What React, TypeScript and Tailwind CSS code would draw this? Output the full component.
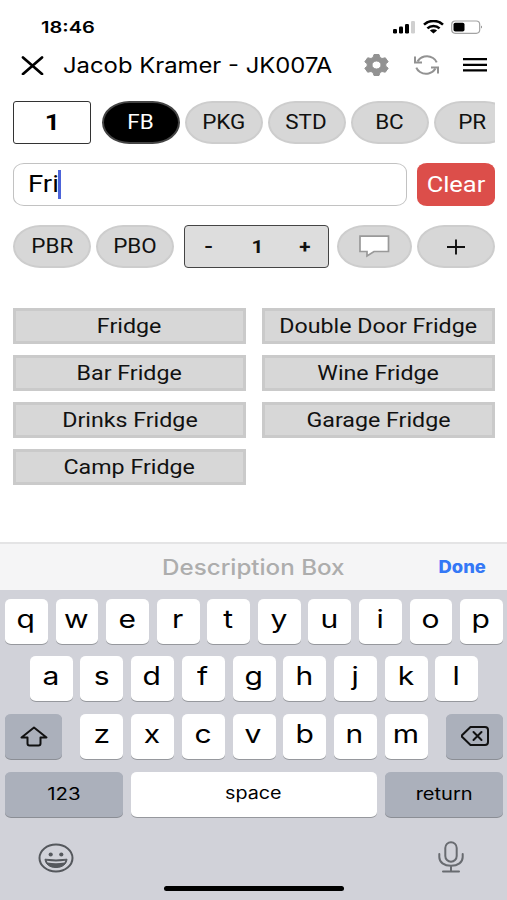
import type { ReactNode } from "react"
import { clsx } from "clsx"

const CATEGORIES = ["FB", "PKG", "STD", "BC", "PR"]

const RESULTS = [
  "Fridge",
  "Double Door Fridge",
  "Bar Fridge",
  "Wine Fridge",
  "Drinks Fridge",
  "Garage Fridge",
  "Camp Fridge"
]

interface TextProps {
  children: ReactNode
  className?: string
}

// Wide-set label text
function Label({ children, className }: TextProps) {
  return (
    <span className={clsx("inline-block whitespace-nowrap leading-none", className ?? "scale-x-[1.2]")}>
      {children}
    </span>
  )
}

interface PillProps {
  children: ReactNode
  active?: boolean
  className?: string
}

function Pill({ children, active, className }: PillProps) {
  return (
    <button
      className={clsx(
        "flex h-[43px] shrink-0 items-center justify-center rounded-[28px/22px] border-[2.500px] font-[Roboto,sans-serif] text-[19.500px]",
        active ? "border-[#444444] bg-black text-white" : "border-[#cdcdcd] bg-[#d7d7d7] text-[#111111]",
        className ?? "w-[78px]"
      )}
    >
      {children}
    </button>
  )
}

function StatusBar() {
  return (
    <div className="flex h-[46px] items-start justify-between pt-[20px] pr-[24px] pl-[41px]">
      <Label className="mt-[-1px] origin-left scale-x-[1.25] text-[16px] leading-[17px] font-semibold">18:46</Label>
      <div className="flex items-start">
        <svg width="23" height="14" viewBox="0 0 23 14">
          <rect x="0" y="9" width="4" height="4.5" rx="1.2" />
          <rect x="6" y="6.5" width="4" height="7" rx="1.2" />
          <rect x="12" y="4" width="4" height="9.5" rx="1.2" />
          <rect x="18" y="1" width="4" height="12.5" rx="1.2" fill="#d0d0d0" />
        </svg>
        <svg className="ml-[7px]" width="21" height="14" viewBox="0 0 21 14" fill="none" stroke="black" strokeWidth="2.500">
          <path d="M1 4.700C6.200-.3 14.800-.3 20 4.700" />
          <path d="M4.400 8.300C7.800 5.100 13.200 5.100 16.600 8.300" />
          <path d="M10.500 13.400 6.900 10.600C9 8.900 12 8.900 14.100 10.600z" fill="black" stroke="none" />
        </svg>
        <svg className="ml-[7px]" width="32" height="14" viewBox="0 0 32 14">
          <rect x=".7" y="1" width="28" height="12.300" rx="3.500" fill="white" stroke="#a3a3a3" strokeWidth="1.200" />
          <rect x="2.500" y="2.800" width="11" height="8.700" rx="1.800" />
          <path d="M30 5.500q2 1.500 0 3z" fill="#888888" />
        </svg>
      </div>
    </div>
  )
}

function Header() {
  return (
    <header className="flex h-[38px] items-center pr-[20px] pl-[21px]">
      <svg className="shrink-0" width="23" height="20" viewBox="0 0 23 20" fill="none" stroke="black" strokeWidth="2.700" strokeLinecap="round">
        <path d="M2 2.500 21 19M21 2.500 2 19" />
      </svg>
      <h1 className="ml-[19px] flex w-[301px]">
        <Label className="origin-left scale-x-[1.135] text-[21px]">Jacob Kramer - JK007A</Label>
      </h1>
      <svg className="shrink-0" width="25" height="22" viewBox="0 0 25 22" fill="#929292" fillRule="evenodd">
        <path
          d="M10 .5h5l1 3 2 1 3.300-.7 2.900 4-2.400 2v2.400l2.400 2-2.900 4-3.300-.7-2 1-1 3h-5l-1-3-2-1-3.300.7-2.900-4 2.400-2V9.800l-2.400-2 2.900-4 3.300.7 2-1zM12.500 7a4.500 4 0 1 0 0 8 4.500 4 0 0 0 0-8z"
          stroke="#929292"
          strokeLinejoin="round"
        />
      </svg>
      <svg className="ml-[25px] shrink-0" width="25" height="20" viewBox="0 0 25 20" fill="none" stroke="#929292" strokeWidth="2">
        <path d="M3.500 6.500C6.500 1.500 13.500-.5 19 3c1.800 1.100 3 2.500 3.700 4.300" />
        <path d="M1 1.500v6h7" />
        <path d="M21.500 13.500C18.500 18.500 11.500 20.500 6 17c-1.800-1.100-3-2.500-3.700-4.300" />
        <path d="M24 18.500v-6h-7" />
      </svg>
      <svg className="ml-[24px] shrink-0" width="24" height="16" viewBox="0 0 24 16" stroke="black" strokeWidth="2.200">
        <path d="M0 2.200h24M0 7.800h24M0 13.400h24" />
      </svg>
    </header>
  )
}

function Key({ children }: { children: string }) {
  return (
    <div className="flex h-[45px] w-[43px] items-center justify-center rounded-[6px/5px] bg-white pr-[1px] pb-[4px] text-[25px] shadow-[0_1px_0_#96989d]">
      <Label>{children}</Label>
    </div>
  )
}

function DarkKey({ children, className }: { children: ReactNode; className: string }) {
  return (
    <div
      className={clsx(
        "flex h-[45px] items-center justify-center rounded-[6px/5px] bg-[#abb0bb] text-[17px] shadow-[0_1px_0_#8b8e95]",
        className
      )}
    >
      {children}
    </div>
  )
}

function Letters({ row }: { row: string }) {
  return (
    <div className="flex gap-[7.700px]">
      {row.split("").map((letter) => (
        <Key key={letter}>{letter}</Key>
      ))}
    </div>
  )
}

function Keyboard() {
  return (
    <div className="flex h-[310px] flex-col bg-[#d1d2d9] pt-[8.500px] pr-[4px] pl-[5px]">
      <div className="flex flex-col gap-[12.700px]">
        <Letters row="qwertyuiop" />
        <div className="flex justify-center">
          <Letters row="asdfghjkl" />
        </div>
        <div className="flex justify-between">
          <DarkKey className="w-[57px]">
            <svg width="28" height="21" viewBox="0 0 28 21" fill="none" stroke="#111111" strokeWidth="2" strokeLinejoin="round">
              <path d="M14 1.500 26.500 11.500H20.500V17.500q0 2-2 2H9.500q-2 0-2-2V11.500H1.500z" />
            </svg>
          </DarkKey>
          <Letters row="zxcvbnm" />
          <DarkKey className="w-[57px]">
            <svg width="28" height="20" viewBox="0 0 28 20" fill="none" stroke="#111111" strokeWidth="2" strokeLinejoin="round" strokeLinecap="round">
              <path d="M9.500 1H24q3 0 3 3v12q0 3-3 3H9.500L1 10.800q-.8-.8 0-1.600z" />
              <path d="m12.500 6 8 8M20.500 6l-8 8" />
            </svg>
          </DarkKey>
        </div>
        <div className="flex justify-between">
          <DarkKey className="w-[118px]">
            <Label className="mt-[1px] scale-x-[1.2]">123</Label>
          </DarkKey>
          <div className="flex h-[45px] w-[246px] items-center justify-center rounded-[6px/5px] bg-white pr-[2px] pb-[1px] text-[17px] shadow-[0_1px_0_#96989d]">
            <Label className="scale-x-[1.16]">space</Label>
          </div>
          <DarkKey className="w-[118px]">
            <Label className="mt-[1px] scale-x-[1.18]">return</Label>
          </DarkKey>
        </div>
      </div>
      <div className="mt-[24px] flex items-start justify-between pr-[39px] pl-[33px]">
        <svg className="mt-[2px]" width="36" height="30" viewBox="0 0 36 30" fill="none" stroke="#55585d" strokeWidth="2">
          <ellipse cx="18" cy="15" rx="16.500" ry="13.500" />
          <ellipse cx="12.700" cy="11.500" rx="2.100" ry="2" fill="#55585d" stroke="none" />
          <ellipse cx="23.300" cy="11.500" rx="2.100" ry="2" fill="#55585d" stroke="none" />
          <path d="M7 16.200q11 1.600 22 0c-.5 5-4.500 8.300-11 8.300S7.500 21.200 7 16.200z" fill="#55585d" strokeWidth="1" />
          <path d="M8.700 17.700q9.300 1.400 18.600 0l-.8 1.900q-8.500 1.300-17 0z" fill="#d1d2d9" stroke="none" />
        </svg>
        <svg width="26" height="32" viewBox="0 0 26 32" fill="none" stroke="#686b70" strokeWidth="2" strokeLinecap="round">
          <rect x="7.300" y="1.200" width="11.400" height="19.500" rx="5.700" />
          <path d="M1.300 13v3c0 5.200 4.700 8.800 11.700 8.800s11.700-3.600 11.700-8.800v-3M13 24.800v5.500M5 30.500h16" />
        </svg>
      </div>
      <div className="mt-auto mb-[9px] h-[5px] w-[180px] self-center rounded-full bg-black" />
    </div>
  )
}

export default function App() {
  return (
    <div className="flex h-[900px] w-[507px] flex-col overflow-hidden bg-white font-[Inter,sans-serif] text-black">
      <StatusBar />
      <Header />

      <main className="flex flex-1 flex-col pr-[12px] pl-[13px]">
        <div className="mt-[17px] flex overflow-hidden">
          <div className="mr-[11px] flex h-[43px] w-[78px] shrink-0 items-center justify-center rounded-[3px] border-[1.500px] border-[#333333] font-[Roboto,sans-serif] text-[22px] font-bold">
            <Label>1</Label>
          </div>
          <div className="flex gap-[5px]">
            {CATEGORIES.map((name, idx) => (
              <Pill key={name} active={idx === 0}>
                <Label className="mt-[1px] mr-[1px] scale-x-[1.15]">{name}</Label>
              </Pill>
            ))}
          </div>
        </div>

        <div className="mt-[19px] flex justify-between">
          <div className="flex h-[43px] w-[394px] items-center rounded-[11px/9px] border-[1.500px] border-[#c2c2c2] pl-[14px]">
            <span className="flex w-[30px] pt-[1px] font-[Roboto,sans-serif] text-[23.500px]">
              <Label className="origin-left scale-x-[1.17]">Fri</Label>
            </span>
            <span className="h-[29px] w-[2.500px] bg-[#4c63d9]" />
          </div>
          <button className="flex h-[43px] w-[78px] items-center justify-center rounded-[10px/8px] bg-[#dc4e4a] font-[Roboto,sans-serif] text-[22.500px] text-white">
            <Label className="mr-[1px] scale-x-[1.13]">Clear</Label>
          </button>
        </div>

        <div className="mt-[19px] flex">
          <Pill>
            <Label className="scale-x-[1.15]">PBR</Label>
          </Pill>
          <Pill className="ml-[5px] w-[78px]">
            <Label className="scale-x-[1.15]">PBO</Label>
          </Pill>
          <div className="ml-[10px] flex h-[43px] w-[145px] items-center justify-between rounded-[4px] border-[1.500px] border-[#444444] bg-[#dddddd] pr-[18px] pl-[20px] font-[Roboto,sans-serif] text-[18px] font-bold text-[#111111]">
            <Label className="scale-x-[1.3]">-</Label>
            <Label className="scale-x-[1.15] pl-[2px]">1</Label>
            <Label className="scale-x-[1.15]">+</Label>
          </div>
          <Pill className="ml-[8px] w-[75px]">
            <svg width="31" height="23" viewBox="0 0 31 23" fill="white" stroke="#999999" strokeWidth="1.700">
              <path d="M1 1.200h28.500V16.500H15L8 21V16.500H1z" />
            </svg>
          </Pill>
          <Pill className="ml-[5px] w-[78px]">
            <svg width="18" height="16" viewBox="0 0 18 16" stroke="#111111" strokeWidth="1.900">
              <path d="M0 8h18M9 .500v15" />
            </svg>
          </Pill>
        </div>

        <div className="mt-[40px] grid grid-cols-2 gap-x-[16px] gap-y-[11px]">
          {RESULTS.map((item) => (
            <button
              key={item}
              className="flex h-[36px] items-center justify-center border-[3px] border-[#cacaca] bg-[#d7d7d7] font-[Roboto,sans-serif] text-[19.500px] text-[#111111]"
            >
              <Label className="mt-[1px] scale-x-[1.19]">{item}</Label>
            </button>
          ))}
        </div>
      </main>

      <div className="relative flex h-[48px] items-center justify-center border-t-2 border-[#e4e4e5] bg-[#f5f5f6]">
        <Label className="scale-x-[1.15] text-[21px] font-medium text-[#adadad]">Description Box</Label>
        <button className="absolute right-[21px] flex pt-[1px] text-[17px] font-extrabold text-[#3478f6]">
          <Label className="origin-right scale-x-[1.08]">Done</Label>
        </button>
      </div>
      <Keyboard />
    </div>
  )
}
